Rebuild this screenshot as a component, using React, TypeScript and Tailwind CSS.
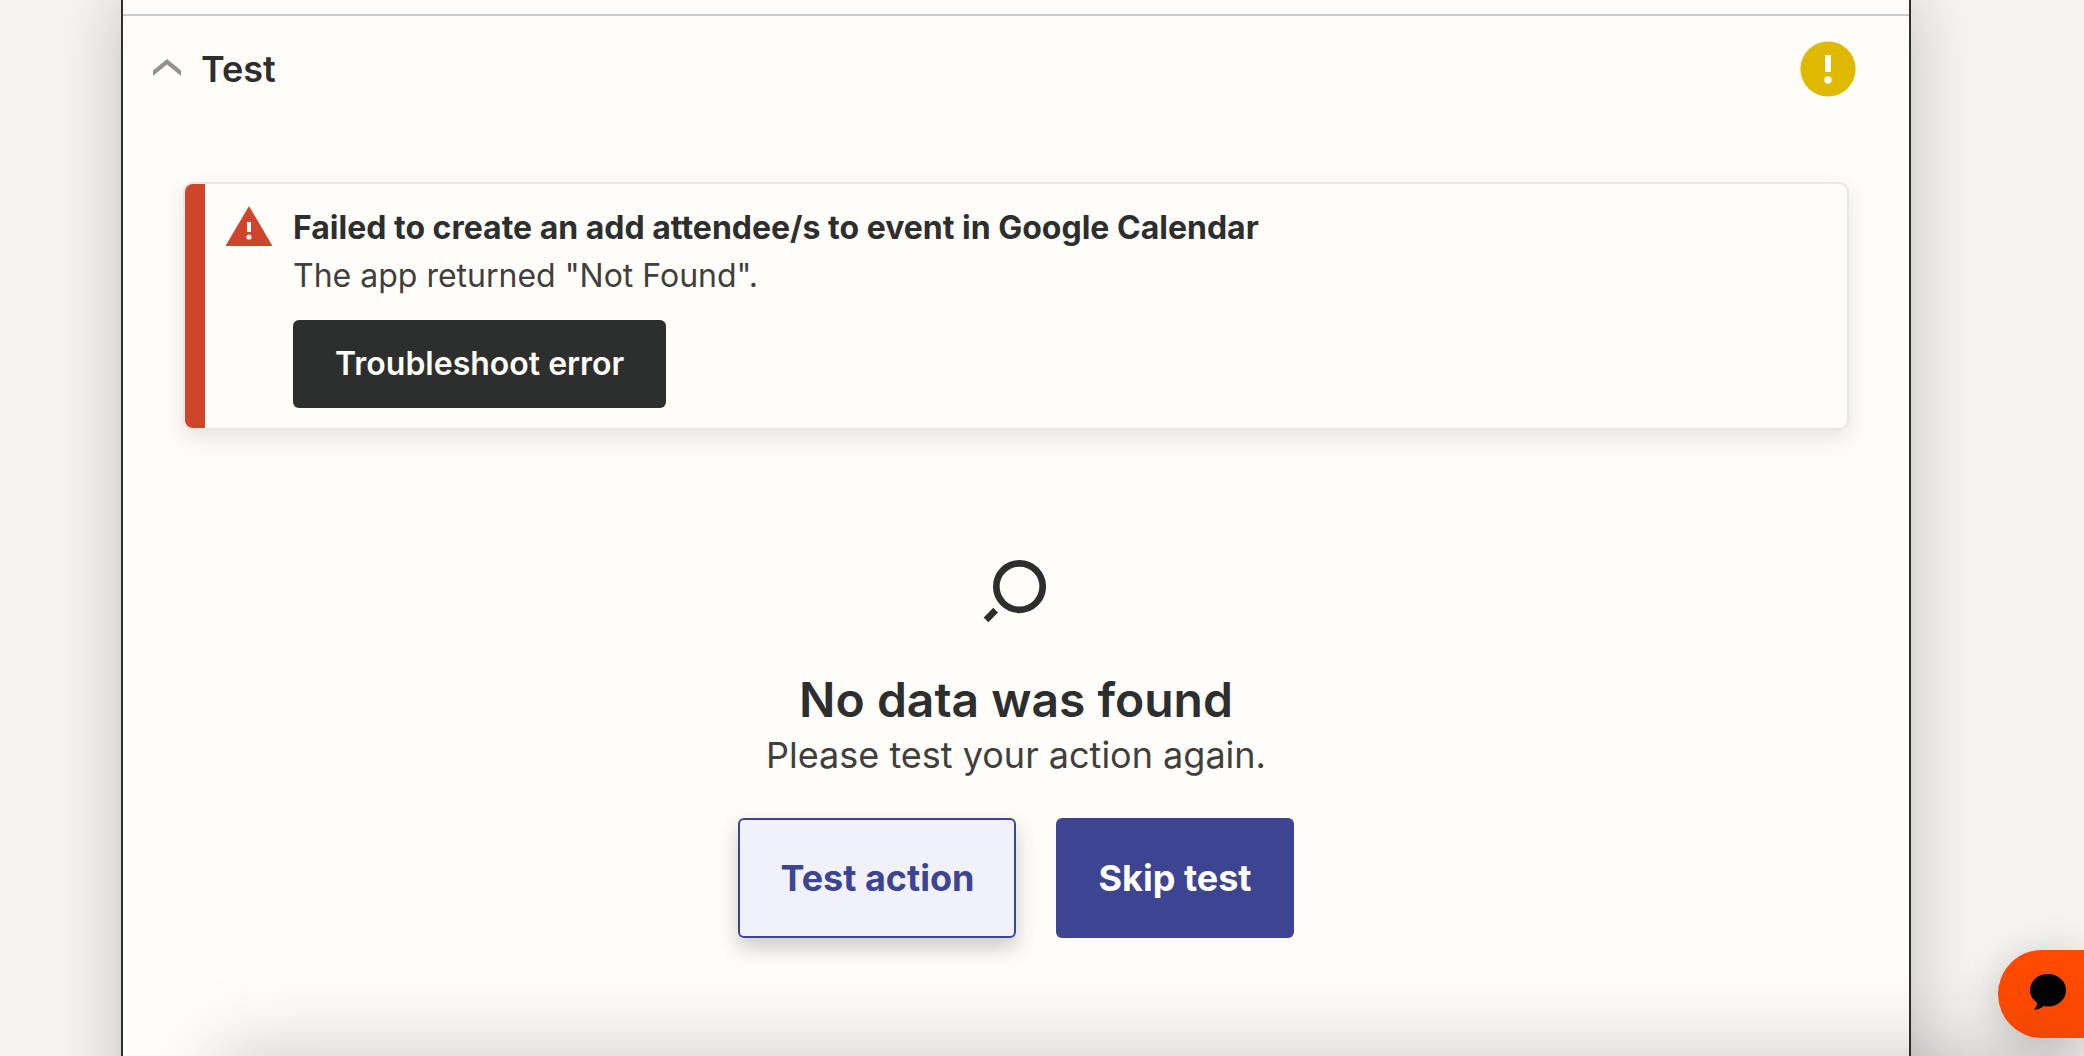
import { useState } from 'react';

const buttonBase = 'rounded-md';

function ChevronIcon() {
  return (
    <svg viewBox="0 0 28 21" className="w-7 h-[21px] fill-[#95928e]" aria-hidden="true">
      <path d="M0 11.5 14 0l14 11.5V17L14 5.5 0 17z" />
    </svg>
  );
}

function StatusIcon() {
  return (
    <svg viewBox="0 0 56 56" className="size-14" role="img" aria-label="Needs attention">
      <circle cx="28" cy="28" r="27.6" fill="#dfb900" />
      <path d="M25 14h6v17h-6z" fill="#fffdf9" />
      <circle cx="28" cy="39" r="3.7" fill="#fffdf9" />
    </svg>
  );
}

function WarningIcon() {
  return (
    <svg viewBox="0 0 48 40" className="w-12 h-10 shrink-0" aria-hidden="true">
      <path d="M24 0 47.5 40H.5z" fill="#ce452b" />
      <path d="M22 16h4v10h-4z" fill="#fffdf9" />
      <circle cx="24" cy="31" r="2.6" fill="#fffdf9" />
    </svg>
  );
}

function SearchIcon() {
  return (
    <svg viewBox="0 0 80 80" className="size-20" aria-hidden="true">
      <circle cx="43.5" cy="36.6" r="23.2" fill="none" stroke="#2d2e2e" strokeWidth="6.7" />
      <path d="M7.700 67.500 17.300 57.800 22 62.500 12.300 72.200z" fill="#2d2e2e" />
    </svg>
  );
}

function ChatIcon() {
  return (
    <svg viewBox="0 0 36 36" className="size-9" aria-hidden="true">
      <path d="M18 0C28 0 36 7 36 16.2S28 32.5 18 32.5c-1.500 0-3-.2-4.400-.5C11.500 33.500 8.500 35.600 5 35.800c-.6 0-.7-.7-.3-1.100C6.200 33 7 31 6.900 28.500 2.700 25.600 0 21.200 0 16.200 0 7 8 0 18 0z" />
    </svg>
  );
}

function ErrorCard() {
  return (
    <section
      role="alert"
      className="flex mx-[60px] mt-[85px] rounded-[10px] border-2 border-[#e8e7e4] bg-[#fffdf9] shadow-[0_8px_20px_rgba(45,46,46,0.12)]"
    >
      <div className="w-5 shrink-0 rounded-l-lg bg-[#ce452b]" />
      <div className="flex gap-5 pl-5 pt-[22px] pb-5">
        <WarningIcon />
        <div className="text-[32px] leading-[48px]">
          <h3 className="font-bold -mt-0.5 text-[#2d2e2e]">
            Failed to create an add attendee/s to event in Google Calendar
          </h3>
          <p className="text-[#413f3d]">The app returned "Not Found".</p>
          <button
            type="button"
            className={`${buttonBase} mt-5 h-[88px] px-[42px] bg-[#2d2e2e] font-semibold text-[#fffdf9]`}
          >
            Troubleshoot error
          </button>
        </div>
      </div>
    </section>
  );
}

function EmptyState() {
  return (
    <section className="flex flex-col items-center pt-[120px] text-center text-4xl">
      <SearchIcon />
      <h3 className="mt-10 text-[48px] leading-[60px] font-semibold">No data was found</h3>
      <p className="leading-[50px] text-[#413f3d]">Please test your action again.</p>
      <div className="flex gap-10 mt-[38px]">
        <button
          type="button"
          className={`${buttonBase} h-[120px] px-10 border-2 border-[#3d4592] bg-[#f0f1fa] font-bold text-[#3d4592] shadow-[0_10px_20px_rgba(45,46,46,0.24)]`}
        >
          Test action
        </button>
        <button type="button" className={`${buttonBase} h-[120px] px-[42px] bg-[#3d4592] font-bold text-[#fffdf9]`}>
          Skip test
        </button>
      </div>
    </section>
  );
}

export default function App() {
  const [open, setOpen] = useState(true);

  return (
    <div className="relative h-screen overflow-hidden bg-[#f6f4f0] pl-[121px] pr-[173px] font-[Inter,sans-serif] text-[#2d2e2e]">
      <main className="min-h-[110vh] border-x-2 border-[#2d2e2e] bg-[#fffdf9] pt-3.5 shadow-[0_0_60px_rgba(45,46,46,0.26)]">
        <header className="flex items-center justify-between border-t-2 border-[#cccaca] pt-[25px] pl-[30px] pr-[53px]">
          <h2 className="text-4xl leading-[56px] font-semibold">
            <button
              type="button"
              aria-expanded={open}
              onClick={() => setOpen(!open)}
              className="flex items-center gap-5 font-semibold"
            >
              <ChevronIcon />
              Test
            </button>
          </h2>
          <StatusIcon />
        </header>
        {open && (
          <>
            <ErrorCard />
            <EmptyState />
          </>
        )}
      </main>

      {/* Chat launcher */}
      <button
        type="button"
        aria-label="Open chat"
        className="absolute right-0 bottom-[18px] flex h-[88px] w-[86px] items-center rounded-l-full bg-[#ff4a00] pl-8 pb-1 shadow-[0_8px_40px_rgba(45,46,46,0.25)]"
      >
        <ChatIcon />
      </button>

      {/* Shade cast by the bar below the fold */}
      <div className="pointer-events-none absolute top-full left-[220px] right-0 h-40 shadow-[0_0_80px_rgba(45,46,46,0.26)]" />
    </div>
  );
}
